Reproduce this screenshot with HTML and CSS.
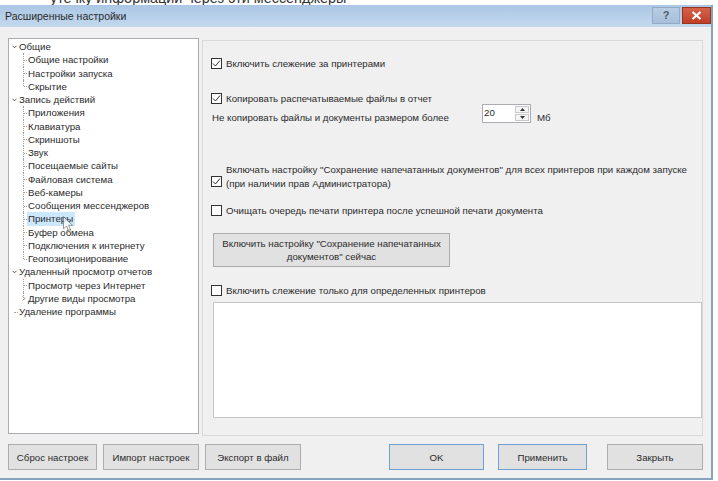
FILE: index.html
```html
<!DOCTYPE html>
<html lang="ru">
<head>
    <meta charset="UTF-8">
    <title>Расширенные настройки</title>
    <link rel="stylesheet" href="styles.css">
</head>
<body>

<!-- window behind the dialog -->
<div class="backdrop"><span>утечку информации через эти мессенджеры</span></div>

<div class="window">
    <div class="titlebar">
        <span class="title">Расширенные настройки</span>
        <div class="caption">
            <div class="cap-help">?</div>
            <div class="cap-close">
                <svg width="11" height="9" viewBox="0 0 11 9"><path d="M1.5 1 L9.5 8 M9.5 1 L1.5 8" stroke="#fff" stroke-width="2.2"/></svg>
            </div>
        </div>
    </div>

    <div class="client">
        <div class="main">
            <!-- settings tree -->
            <div class="tree">
                <div class="node"><span class="exp"><svg width="5" height="4" viewBox="0 0 5 4"><path d="M0.5 0.8 L2.5 2.8 L4.5 0.8" fill="none" stroke="#555"/></svg></span><span class="label">Общие</span></div>
                <div class="leaf"><span class="label">Общие настройки</span></div>
                <div class="leaf"><span class="label">Настройки запуска</span></div>
                <div class="leaf last"><span class="label">Скрытие</span></div>

                <div class="node"><span class="exp"><svg width="5" height="4" viewBox="0 0 5 4"><path d="M0.5 0.8 L2.5 2.8 L4.5 0.8" fill="none" stroke="#555"/></svg></span><span class="label">Запись действий</span></div>
                <div class="leaf"><span class="label">Приложения</span></div>
                <div class="leaf"><span class="label">Клавиатура</span></div>
                <div class="leaf"><span class="label">Скриншоты</span></div>
                <div class="leaf"><span class="label">Звук</span></div>
                <div class="leaf"><span class="label">Посещаемые сайты</span></div>
                <div class="leaf"><span class="label">Файловая система</span></div>
                <div class="leaf"><span class="label">Веб-камеры</span></div>
                <div class="leaf"><span class="label">Сообщения мессенджеров</span></div>
                <div class="leaf"><span class="label selected">Принтеры</span></div>
                <div class="leaf"><span class="label">Буфер обмена</span></div>
                <div class="leaf"><span class="label">Подключения к интернету</span></div>
                <div class="leaf last"><span class="label">Геопозиционирование</span></div>

                <div class="node"><span class="exp"><svg width="5" height="4" viewBox="0 0 5 4"><path d="M0.5 0.8 L2.5 2.8 L4.5 0.8" fill="none" stroke="#555"/></svg></span><span class="label">Удаленный просмотр отчетов</span></div>
                <div class="leaf"><span class="label">Просмотр через Интернет</span></div>
                <div class="leaf last closed"><span class="side-exp"><svg width="4" height="5" viewBox="0 0 4 5"><path d="M0.8 0.5 L2.8 2.5 L0.8 4.5" fill="none" stroke="#777"/></svg></span><span class="label">Другие виды просмотра</span></div>

                <div class="node plain"><span class="exp"></span><span class="label">Удаление программы</span></div>

                <!-- mouse pointer over the tree -->
                <svg class="pointer" width="11" height="17" viewBox="0 0 11 17"><path d="M0.5 0.5 L0.5 13 L3.5 10 L5.8 15.5 L7.8 14.6 L5.6 9.3 L9.6 9.3 Z" fill="#fff" stroke="#6a6a6a" stroke-width="0.9" opacity="0.75"/></svg>
            </div>

            <!-- printers page -->
            <div class="panel">
                <div class="check-row">
                    <span class="box checked"><svg width="9" height="9" viewBox="0 0 9 9"><path d="M1 4.5 L3.4 7 L8 1.5" fill="none" stroke="#333" stroke-width="1"/></svg></span>
                    <span>Включить слежение за принтерами</span>
                </div>

                <div class="check-row row-copy">
                    <span class="box checked"><svg width="9" height="9" viewBox="0 0 9 9"><path d="M1 4.5 L3.4 7 L8 1.5" fill="none" stroke="#333" stroke-width="1"/></svg></span>
                    <span>Копировать распечатываемые файлы в отчет</span>
                </div>

                <div class="size-row">
                    <span class="size-label">Не копировать файлы и документы размером более</span>
                    <div class="spinner">
                        <span class="spin-value">20</span>
                        <div class="spin-buttons">
                            <span class="spin-up"><svg width="5" height="3" viewBox="0 0 5 3"><path d="M0 3 L2.5 0 L5 3 Z" fill="#333"/></svg></span>
                            <span class="spin-down"><svg width="5" height="3" viewBox="0 0 5 3"><path d="M0 0 L2.5 3 L5 0 Z" fill="#333"/></svg></span>
                        </div>
                    </div>
                    <span class="size-unit">Мб</span>
                </div>

                <div class="check-row row-multi">
                    <span class="box checked"><svg width="9" height="9" viewBox="0 0 9 9"><path d="M1 4.5 L3.4 7 L8 1.5" fill="none" stroke="#333" stroke-width="1"/></svg></span>
                    <span>Включать настройку "Сохранение напечатанных документов" для всех принтеров при каждом запуске<br>(при наличии прав Администратора)</span>
                </div>

                <div class="check-row row-clear">
                    <span class="box"></span>
                    <span>Очищать очередь печати принтера после успешной печати документа</span>
                </div>

                <button class="btn btn-now">Включить настройку "Сохранение напечатанных<br>документов" сейчас</button>

                <div class="check-row row-only">
                    <span class="box"></span>
                    <span>Включить слежение только для определенных принтеров</span>
                </div>

                <div class="printer-list"></div>
            </div>
        </div>

        <div class="footer">
            <button class="btn btn-reset">Сброс настроек</button>
            <button class="btn btn-import">Импорт настроек</button>
            <button class="btn btn-export">Экспорт в файл</button>

            <button class="btn btn-default btn-ok">OK</button>
            <button class="btn btn-default btn-apply">Применить</button>
            <button class="btn btn-close">Закрыть</button>
        </div>
    </div>
</div>

</body>
</html>
```

FILE: styles.css
```css
body {
    margin: 0;
    width: 718px;
    height: 481px;
    overflow: hidden;
    background-color: #fff;
    font-family: "Liberation Sans", Arial, sans-serif;
    font-size: 9.7px;
    color: #2b2b2b;
}

.backdrop {
    height: 5px;
    overflow: hidden;
    padding-left: 50px;
    font-size: 14.4px;
    color: #333;
}

.backdrop span {
    display: block;
    line-height: 1;
    margin-top: -9px;
}

.window {
    width: 711px;
    height: 473px;
    border-right: 2px solid #86a3c0;
    border-bottom: 2px solid #86a3c0;
    display: flex;
    flex-direction: column;
}

.titlebar {
    height: 22px;
    display: flex;
    background: linear-gradient(#abc7e4, #c3d8ee);
}

.title {
    padding-left: 5px;
    line-height: 22px;
    font-size: 10.5px;
    color: #2a2a2a;
}

.caption {
    margin-left: auto;
    display: flex;
    gap: 2px;
    padding-top: 2px;
}

.cap-help {
    width: 28px;
    height: 17px;
    box-sizing: border-box;
    border: 1px solid #93abc6;
    background: linear-gradient(#b8cde4, #a6bfda);
    color: #4c5c6e;
    font-size: 11px;
    font-weight: bold;
    text-align: center;
    line-height: 15px;
}

.cap-close {
    width: 29px;
    height: 17px;
    box-sizing: border-box;
    border: 1px solid #9a3322;
    background: linear-gradient(#d4634c, #c03e27);
    display: flex;
    align-items: center;
    justify-content: center;
}

.client {
    flex: 1;
    background-color: #f0f0f0;
    padding: 11px 8px 8px 8px;
    display: flex;
    flex-direction: column;
}

.main {
    display: flex;
    height: 398px;
}

/* tree */

.tree {
    position: relative;
    width: 191px;
    height: 396px;
    box-sizing: border-box;
    border: 1px solid #abadb3;
    background-color: #fff;
    padding-top: 1px;
}

.node,
.leaf {
    position: relative;
    height: 13.25px;
    line-height: 13.25px;
    white-space: nowrap;
}

.node {
    padding-left: 3px;
}

.exp {
    display: inline-block;
    width: 7px;
    height: 13px;
    vertical-align: top;
}

.exp svg {
    display: block;
    margin-top: 5px;
}

.node.plain::after {
    content: "";
    position: absolute;
    left: 5px;
    top: 50%;
    width: 4px;
    border-top: 1px dotted #a0a0a0;
}

.leaf {
    padding-left: 19px;
}

.leaf::before {
    content: "";
    position: absolute;
    left: 14px;
    top: 0;
    bottom: 0;
    border-left: 1px dotted #a0a0a0;
}

.leaf.last::before {
    bottom: 50%;
}

.leaf::after {
    content: "";
    position: absolute;
    left: 15px;
    top: 50%;
    width: 3px;
    border-top: 1px dotted #a0a0a0;
}

.leaf.closed::after {
    display: none;
}

.side-exp {
    position: absolute;
    left: 13px;
    top: 4px;
    background-color: #fff;
    line-height: 0;
}

.label {
    display: inline-block;
    height: 13.25px;
}

.label.selected {
    background-color: #cce8ff;
    margin-left: -1px;
    padding: 0 2px 0 1px;
}

.pointer {
    position: absolute;
    left: 54px;
    top: 177px;
}

/* right page */

.panel {
    flex: 1;
    margin-left: 3px;
    margin-top: 2px;
    height: 396px;
    box-sizing: border-box;
    border: 1px solid #d9d9d9;
    padding: 16px 0 0 8px;
}

.check-row {
    display: flex;
    align-items: center;
    line-height: 13px;
}

.box {
    width: 11px;
    height: 11px;
    box-sizing: border-box;
    border: 1px solid #333;
    background-color: #fff;
    margin-right: 4px;
    flex: none;
    display: flex;
    align-items: center;
    justify-content: center;
}

.row-copy {
    margin-top: 22px;
}

.size-row {
    display: flex;
    height: 20px;
    margin-top: -1px;
}

.size-label {
    width: 271px;
    padding-left: 1px;
    box-sizing: border-box;
    align-self: flex-end;
    line-height: 13px;
}

.spinner {
    width: 49px;
    height: 19px;
    box-sizing: border-box;
    border: 1px solid #abadb3;
    background-color: #fff;
    display: flex;
}

.spin-value {
    flex: 1;
    padding-left: 1px;
    line-height: 16px;
}

.spin-buttons {
    width: 14px;
    display: flex;
    flex-direction: column;
    padding: 1px;
    gap: 1px;
}

.spin-up,
.spin-down {
    flex: 1;
    border: 1px solid #c9c9c9;
    background-color: #f4f4f4;
    display: flex;
    align-items: center;
    justify-content: center;
}

.size-unit {
    margin-left: 6px;
    align-self: flex-end;
    line-height: 13px;
}

.row-multi {
    margin-top: 39px;
    line-height: 14px;
}

.row-multi .box {
    margin-top: 9px;
}

.row-clear {
    margin-top: 13px;
}

.row-only {
    margin-top: 17px;
}

.printer-list {
    margin: 5px 0 0 2px;
    height: 116px;
    box-sizing: border-box;
    border: 1px solid #c5c5c5;
    background-color: #fff;
}

/* buttons */

.btn {
    height: 26px;
    box-sizing: border-box;
    border: 1px solid #adadad;
    background-color: #e1e1e1;
    font-family: inherit;
    font-size: inherit;
    color: #2b2b2b;
    padding: 0;
    cursor: pointer;
}

.btn-now {
    display: block;
    width: 237px;
    height: 34px;
    margin: 16px 0 0 2px;
    line-height: 13px;
}

.btn-default {
    border-color: #6e9fd6;
}

.footer {
    margin-top: 8px;
    display: flex;
}

.btn-reset {
    width: 89px;
}

.btn-import {
    width: 96px;
    margin-left: 6px;
}

.btn-export {
    width: 96px;
    margin-left: 6px;
}

.btn-ok {
    width: 95px;
    margin-left: auto;
}

.btn-apply {
    width: 89px;
    margin-left: 14px;
}

.btn-close {
    width: 96px;
    margin-left: 20px;
}
```
